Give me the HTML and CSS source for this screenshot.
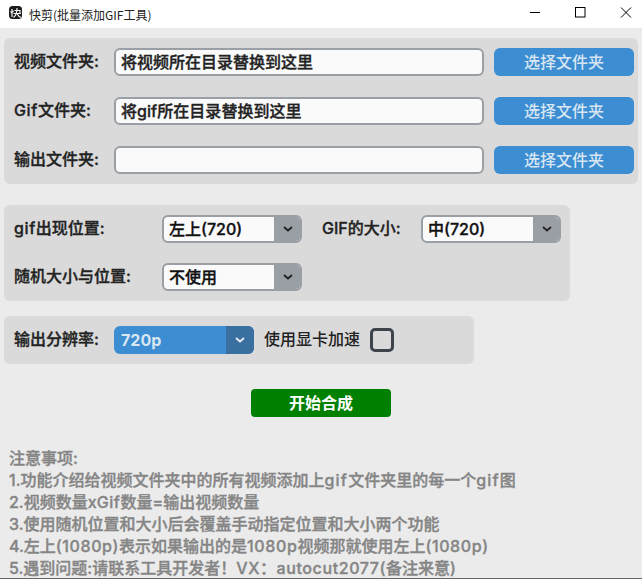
FILE: index.html
```html
<!DOCTYPE html>
<html lang="zh">
<head>
<meta charset="utf-8">
<title>快剪(批量添加GIF工具)</title>
<link rel="stylesheet" href="styles.css">
</head>
<body>
<header class="titlebar">
  <div class="title-left">
    <svg class="app-icon" width="13" height="13" viewBox="0 0 13 13"><rect width="13" height="13" rx="3.500" fill="#1c1c1c"/><path d="M3 3v8M1.500 5.500l1.200 1.500M4.500 5l-1 1M5.500 4.500h5.500v3M4.500 7.500h7.500M8 2c0 4.500-.6 7.500-3.500 9.500M8.300 8c.8 1.700 2 2.800 3.700 3.500" stroke="#f2f2f2" stroke-width="1.200" fill="none"/></svg>
    <span class="title-text">快剪(批量添加GIF工具)</span>
  </div>
  <div class="win-controls">
    <svg class="win-btn" width="46" height="28" viewBox="0 0 46 28"><path d="M19 12.500h10" stroke="#000" stroke-width="1"/></svg>
    <svg class="win-btn" width="46" height="28" viewBox="0 0 46 28"><rect x="18.500" y="7.500" width="9.500" height="9.500" fill="none" stroke="#000" stroke-width="1"/></svg>
    <svg class="win-btn" width="46" height="28" viewBox="0 0 46 28"><path d="M18 7.500l10 10M28 7.500l-10 10" stroke="#000" stroke-width="1" fill="none"/></svg>
  </div>
</header>
<main class="content">
  <section class="panel folders">
    <label class="label">视频文件夹:</label>
    <input class="text-input" value="将视频所在目录替换到这里">
    <button class="btn-blue">选择文件夹</button>
    <label class="label"><span class="lat-wide">Gif</span>文件夹:</label>
    <input class="text-input text-input-latin" value="将gif所在目录替换到这里">
    <button class="btn-blue">选择文件夹</button>
    <label class="label">输出文件夹:</label>
    <input class="text-input" value="">
    <button class="btn-blue">选择文件夹</button>
  </section>

  <section class="panel options">
    <label class="label"><span class="lat-wide">gif</span>出现位置:</label>
    <div class="select"><span class="select-value">左上(720)</span><span class="select-arrow"><svg width="10" height="6" viewBox="0 0 10 6"><path d="M1 1l4 3.500 4-3.500" fill="none" stroke="#222" stroke-width="1.800"/></svg></span></div>
    <label class="label">GIF的大小:</label>
    <div class="select"><span class="select-value">中(720)</span><span class="select-arrow"><svg width="10" height="6" viewBox="0 0 10 6"><path d="M1 1l4 3.500 4-3.500" fill="none" stroke="#222" stroke-width="1.800"/></svg></span></div>
    <label class="label">随机大小与位置:</label>
    <div class="select"><span class="select-value">不使用</span><span class="select-arrow"><svg width="10" height="6" viewBox="0 0 10 6"><path d="M1 1l4 3.500 4-3.500" fill="none" stroke="#222" stroke-width="1.800"/></svg></span></div>
  </section>

  <section class="panel output">
    <label class="label output-label">输出分辨率:</label>
    <div class="select select-blue"><span class="select-value">720p</span><span class="select-arrow"><svg width="10" height="6" viewBox="0 0 10 6"><path d="M1 1l4 3.500 4-3.500" fill="none" stroke="#e8eef5" stroke-width="1.800"/></svg></span></div>
    <span class="check-label">使用显卡加速</span>
    <span class="checkbox"></span>
  </section>

  <div class="action"><button class="btn-green">开始合成</button></div>

  <section class="notes">
    <p>注意事项:</p>
    <p>1.功能介绍给视频文件夹中的所有视频添加上<span class="lat-gif">gif</span>文件夹里的每一个<span class="lat-gif">gif</span>图</p>
    <p>2.视频数量x<span class="lat-wide">Gif</span>数量=输出视频数量</p>
    <p>3.使用随机位置和大小后会覆盖手动指定位置和大小两个功能</p>
    <p>4.左上<span class="lat-num">(1080p)</span>表示如果输出的是<span class="lat-num">1080p</span>视频那就使用左上<span class="lat-num">(1080p)</span></p>
    <p>5.遇到问题:请联系工具开发者！<span class="lat-num">VX：autocut2077(</span>备注来意)</p>
  </section>
</main>
</body>
</html>
```
FILE: styles.css
```css
* { box-sizing: border-box; }
html, body { height: 100%; }
body {
  margin: 0;
  background: #ebebeb;
  font-family: Inter, "Noto Sans CJK SC", sans-serif;
  font-size: 16px;
  color: #222;
  overflow: hidden;
  border-bottom: 1px solid #666;
}
.titlebar {
  height: 28px;
  background: #fff;
  display: flex;
  justify-content: space-between;
  align-items: center;
}
.title-left { display: flex; align-items: center; padding-left: 9px; gap: 7px; }
.app-icon { display: block; margin-top: -3px; }
.title-text { font-size: 12px; color: #222; font-family: "Noto Sans CJK SC", sans-serif; }
.win-controls { display: flex; margin-right: -7px; }
.win-btn { display: block; }
.content { padding: 10px 4px 0; height: 550px; overflow: hidden; }
.panel { background: #dadada; border-radius: 6px; padding: 10px; }
.lat-wide { letter-spacing: .6px; }
.lat-gif { letter-spacing: 1.2px; }
.lat-num { letter-spacing: .6px; }
.label {
  font-weight: 500;
  -webkit-text-stroke: .35px currentColor;
  line-height: 26px;
  height: 28px;
  white-space: nowrap;
}
.folders {
  width: 634px;
  display: grid;
  grid-template-columns: 100px 370px 140px;
  row-gap: 21px;
}
.folders .btn-blue { margin-left: 10px; width: 140px; }
.text-input {
  height: 28px;
  width: 370px;
  border: 2px solid #9a9ea5;
  border-radius: 6px;
  background: #fafafa;
  padding: 0 5px 2px;
  font: 500 16px Inter, "Noto Sans CJK SC", sans-serif;
  -webkit-text-stroke: .35px currentColor;
  color: #222;
  outline: none;
}
.text-input-latin { letter-spacing: .05px; }
.btn-blue {
  height: 28px;
  border: 0;
  border-radius: 6px;
  background: #3c8dd2;
  color: #d8e6f2;
  font: 500 16px "Noto Sans CJK SC", sans-serif;
  padding: 0 0 2px;
}
.options {
  width: 566px;
  margin-top: 21px;
  padding-right: 9px;
  display: grid;
  grid-template-columns: 148px 140px 119px 140px;
  row-gap: 20px;
}
.options > .label:nth-of-type(2) { margin-left: 20px; }
.select {
  height: 28px;
  width: 140px;
  display: flex;
  border: 2px solid #9a9ea5;
  border-radius: 6px;
  background: #fafafa;
  overflow: hidden;
}
.select-value {
  flex: 1;
  padding-left: 5px;
  line-height: 24px;
  font-weight: 500;
  -webkit-text-stroke: .35px currentColor;
  color: #111;
}
.select-arrow {
  width: 27px;
  margin-right: -1px;
  background: #9a9ea5;
  display: flex;
  align-items: center;
  justify-content: center;
}
.output {
  width: 470px;
  margin-top: 15px;
  display: flex;
  align-items: center;
}
.output-label { width: 100px; }
.select-blue { border: 0; background: #3c8dd2; }
.select-blue .select-value { color: #d8e6f2; padding-left: 7px; line-height: 28px; font-weight: 700; -webkit-text-stroke: 0; }
.select-blue .select-arrow { width: 28px; margin-right: 0; background: #3a709f; }
.check-label { margin-left: 10px; font-weight: 500; line-height: 26px; height: 28px; }
.checkbox {
  width: 24px;
  height: 24px;
  margin-left: 10px;
  border: 3px solid #3e444c;
  border-radius: 5px;
}
.action { display: flex; margin-top: 25px; padding-left: 247px; }
.btn-green {
  width: 140px;
  height: 28px;
  border: 0;
  border-radius: 4px;
  background: #008000;
  color: #fff;
  font: 700 16px "Noto Sans CJK SC", sans-serif;
  padding: 0 0 2px;
}
.notes {
  margin-top: 30px;
  padding-left: 5px;
  color: #858585;
  font-weight: 500;
  -webkit-text-stroke: .35px currentColor;
  line-height: 22px;
}
.notes p { margin: 0; white-space: nowrap; }
```
